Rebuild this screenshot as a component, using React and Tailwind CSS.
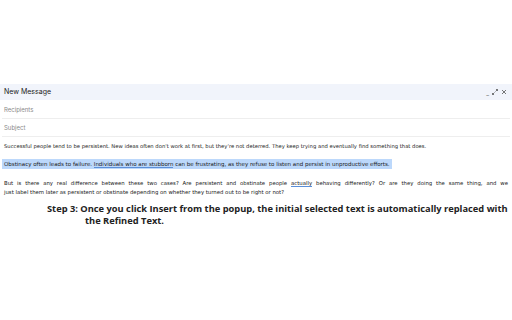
import React from 'react';

const body = { fontFamily: '"DejaVu Sans", Verdana, sans-serif' };

const App = () => {
    return (
        <div className="w-[512px] h-[320px] bg-white overflow-hidden" style={{ fontFamily: 'Inter, sans-serif' }}>
            <div className="h-[84px]" />
            <div className="h-[16px] bg-[#f1f4fb] flex items-center justify-between pl-[4px] pr-[5px]">
                <span className="text-[7px] text-[#222]">New Message</span>
                <div className="flex items-center gap-[3px] text-[#666]">
                    <span className="text-[6px] leading-none mt-[2px]">_</span>
                    <svg width="6" height="6" viewBox="0 0 12 12" fill="none" stroke="#555" strokeWidth="1.6">
                        <path d="M7 5 L11 1 M8 1 H11 V4 M5 7 L1 11 M1 8 V11 H4" />
                    </svg>
                    <svg width="6" height="6" viewBox="0 0 12 12" fill="none" stroke="#555" strokeWidth="1.6">
                        <path d="M2 2 L10 10 M10 2 L2 10" />
                    </svg>
                </div>
            </div>
            <div className="mx-[2px] h-[19px] flex items-center pl-[2px] border-b border-[#eeeeee]">
                <span className="text-[6px] text-[#8a8a8a]">Recipients</span>
            </div>
            <div className="mx-[2px] h-[18px] flex items-center pl-[2px] border-b border-[#eeeeee]">
                <span className="text-[6px] text-[#8a8a8a]">Subject</span>
            </div>
            <div className="px-[4px] pt-[5px] text-[5.25px] text-[#1a1a1a] leading-[9px]" style={body}>
                <p>Successful people tend to be persistent. New ideas often don't work at first, but they're not deterred. They keep trying and eventually find something that does.</p>
                <p className="mt-[9px] text-[5.5px]">
                    <span className="bg-[#bcd8fb] py-[2px] -ml-[2px] pl-[2px] pr-[2px]">
                        Obstinacy often leads to failure. <span className="border-b border-[#5b8fd8]">Individuals who are stubborn</span> can be frustrating, as they refuse to listen and persist in unproductive efforts.
                    </span>
                </p>
                <div className="mt-[10px] text-[5.35px]">
                    <p className="text-justify [text-align-last:justify] whitespace-nowrap">
                        But is there any real difference between these two cases? Are persistent and obstinate people <span className="border-b border-[#5b8fd8]">actually</span> behaving differently? Or are they doing the same thing, and we
                    </p>
                    <p>just label them later as persistent or obstinate depending on whether they turned out to be right or not?</p>
                </div>
            </div>
            <div className="mt-[6px] text-[9.3px] font-bold text-[#222] leading-[12px]" style={{ fontFamily: '"Open Sans", "Noto Sans", sans-serif' }}>
                <div className="pl-[47px] whitespace-nowrap">Step 3: Once you click Insert from the popup, the initial selected text is automatically replaced with</div>
                <div className="pl-[85px]">the Refined Text.</div>
            </div>
        </div>
    );
};

export default App;
